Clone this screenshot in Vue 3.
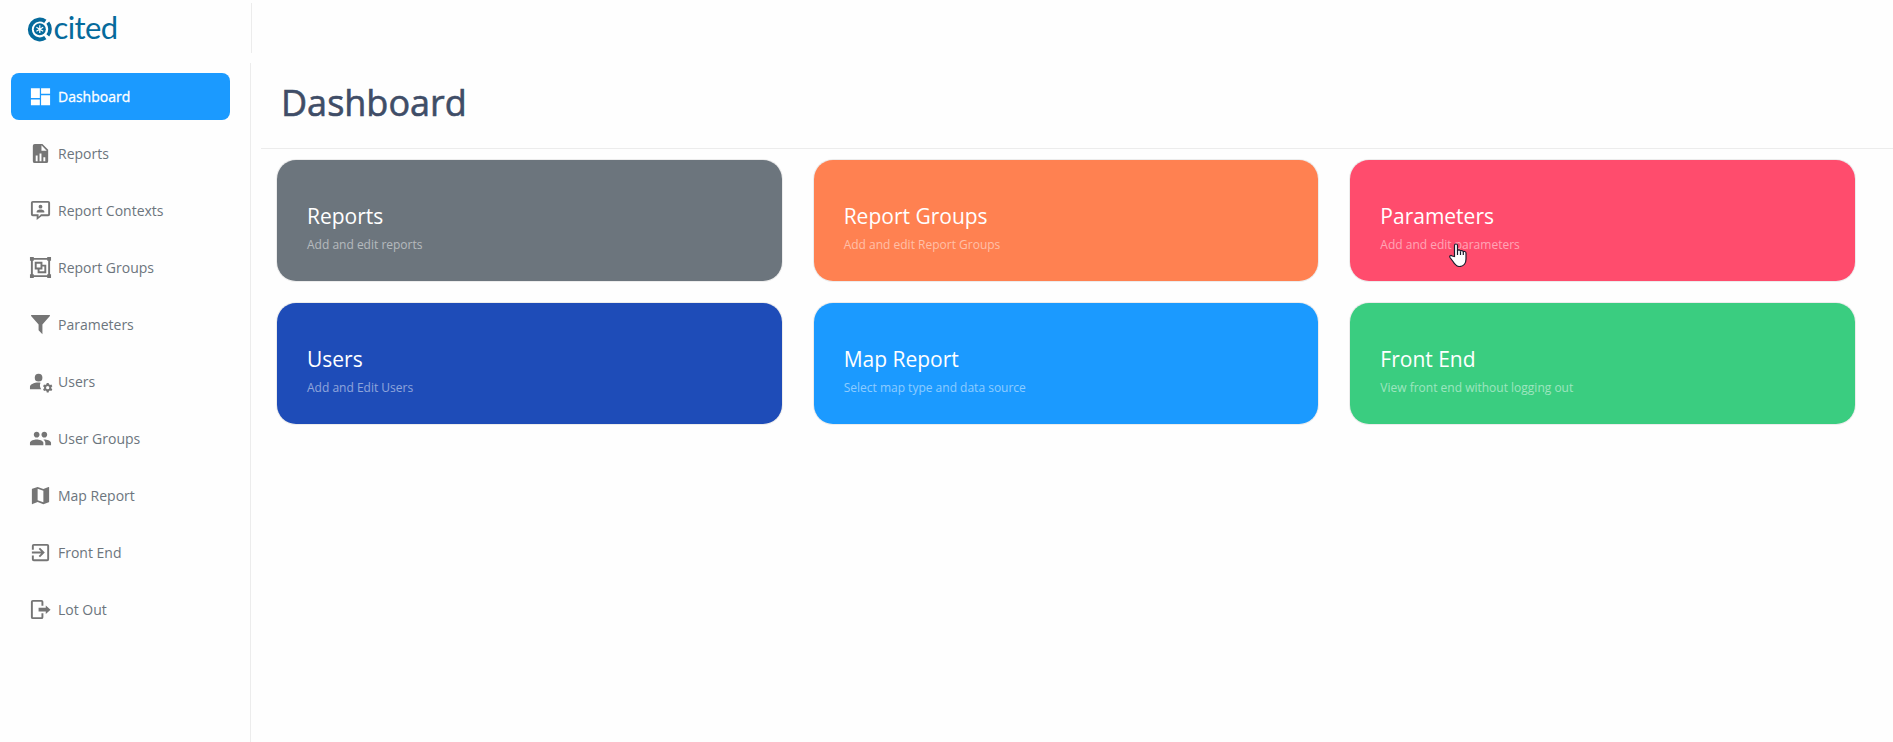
<script setup>
const items = [
  { label: 'Dashboard', active: true, d: 'M2 3.3h9.3v10.2H2zM12.6 3.3H22v5.9h-9.4zM2 15h9.3v6.2H2zM12.6 10.7H22v10.5h-9.4z' },
  { label: 'Reports', d: 'M14 2H6a2 2 0 0 0-2 2v16a2 2 0 0 0 2 2h12a2 2 0 0 0 2-2V8l-6-6zM9 20H7v-6h2v6zm4 0h-2v-8h2v8zm4 0h-2v-4h2v4zM13 9V3.500L18.500 9H13z' },
  { label: 'Report Contexts', d: 'M20 2H4a2 2 0 0 0-2 2v12a2 2 0 0 0 2 2h4v4l5-4h7a2 2 0 0 0 2-2V4a2 2 0 0 0-2-2zm0 14h-7.500L10 18.500V16H4V4h16v12zM12 6a2 2 0 1 1 0 4 2 2 0 0 1 0-4zM16 14H8v-1c0-1.330 2.670-2 4-2s4 .670 4 2v1z' },
  { label: 'Report Groups', d: 'M1 1v4h1v14H1v4h4v-1h14v1h4v-4h-1V5h1V1h-4v1H5V1H1zm4 3h14v1h1v14h-1v1H5v-1H4V5h1V4zm1 2v8h3v4h9V9h-4V6H6zm2 2h4v4H8V8zm6 3h2v5h-5v-2h3v-3z' },
  { label: 'Parameters', d: 'M14 12v10.100l-4-4V12L2.200 3V2h19.600v1L14 12z' },
  { label: 'Users', d: 'M10 12a4 4 0 1 0 0-8 4 4 0 0 0 0 8zM12 13.200C11.400 13.050 10.700 13 10 13c-2.420 0-4.680.500-6.610 1.500C1.800 15.340 1 16.300 1 17.350V20h11.800A6.960 6.960 0 0 1 12 13.200zM23.300 18.500c0-.220-.030-.420-.060-.630l1.140-1.010-1-1.730-1.450.490c-.320-.270-.680-.480-1.080-.630L20.500 13.500h-2l-.300 1.490c-.400.150-.760.360-1.080.630l-1.450-.490-1 1.730 1.140 1.010c-.030.210-.060.410-.060.630s.030.420.060.630l-1.140 1.010 1 1.730 1.450-.490c.320.270.680.480 1.080.630l.3 1.490h2l.300-1.490c.400-.150.760-.360 1.080-.630l1.450.490 1-1.730-1.140-1.010c.030-.210.060-.410.060-.630zM19.500 20.200a1.700 1.700 0 1 1 0-3.400 1.700 1.700 0 0 1 0 3.400z' },
  { label: 'User Groups', d: 'M16 11c1.660 0 2.990-1.340 2.990-3S17.660 5 16 5s-3 1.340-3 3 1.340 3 3 3zM8 11c1.660 0 2.990-1.340 2.990-3S9.660 5 8 5 5 6.340 5 8s1.340 3 3 3zM8 13c-2.330 0-7 1.170-7 3.500V19h14v-2.500c0-2.330-4.670-3.500-7-3.500zM16 13c-.290 0-.620.020-.970.050 1.160.840 1.970 1.970 1.970 3.450V19h6v-2.500c0-2.330-4.670-3.500-7-3.500z' },
  { label: 'Map Report', d: 'M20.500 3l-.160.030L15 5.100 9 3 3.360 4.900a.500.500 0 0 0-.360.480V20.500a.500.500 0 0 0 .660.470L9 18.900l6 2.100 5.640-1.900a.500.500 0 0 0 .360-.480V3.500a.500.500 0 0 0-.500-.500zM15 19l-6-2.110V5l6 2.110V19z' },
  { label: 'Front End', d: 'M10.090 15.590L11.500 17l5-5-5-5-1.410 1.410L12.670 11H3v2h9.670l-2.580 2.590zM19 3H5a2 2 0 0 0-2 2v4h2V5h14v14H5v-4H3v4a2 2 0 0 0 2 2h14a2 2 0 0 0 2-2V5a2 2 0 0 0-2-2z' },
  { label: 'Lot Out', d: 'M4 2a2 2 0 0 0-2 2v16a2 2 0 0 0 2 2h9a2 2 0 0 0 2-2v-4h-2v4H4V4h9v4h2V4a2 2 0 0 0-2-2H4zM17.500 7.700v2.600H10v3.800h7.500v2.600L22.500 12.200 17.500 7.700z' },
]
const cards = [
  { title: 'Reports', text: 'Add and edit reports', tone: 'grey' },
  { title: 'Report Groups', text: 'Add and edit Report Groups', tone: 'orange' },
  { title: 'Parameters', text: 'Add and edit parameters', tone: 'pink', pointer: true },
  { title: 'Users', text: 'Add and Edit Users', tone: 'navy' },
  { title: 'Map Report', text: 'Select map type and data source', tone: 'blue' },
  { title: 'Front End', text: 'View front end without logging out', tone: 'green' },
]
</script>

<template>
  <div class="page">
    <aside class="side">
      <div class="brand">
        <svg class="mark" viewBox="0 0 26 26" fill="none" stroke="#056a9c">
          <path d="M18.300 5.300A9.900 9.900 0 1 0 18.300 21.700" stroke-width="4" />
          <path d="M20.800 6.600A10.300 10.300 0 0 1 20.800 19.400" stroke-width="3.600" />
          <circle cx="12.800" cy="13.200" r="6" fill="#056a9c" stroke="none" />
          <path d="M12.800 9.300v7.800M9.400 11.250l6.800 3.900M9.400 15.150l6.800-3.900" stroke="#fff" stroke-width="1.200" />
        </svg>
        <span class="word">cited</span>
      </div>
      <nav class="nav">
        <a v-for="i in items" :key="i.label" class="item" :class="{ active: i.active }">
          <svg class="icon" viewBox="0 0 24 24"><path :d="i.d" fill="currentColor" fill-rule="evenodd" /></svg>
          <span>{{ i.label }}</span>
        </a>
      </nav>
    </aside>
    <main class="main">
      <header class="head"><h1>Dashboard</h1></header>
      <section class="grid">
        <article v-for="c in cards" :key="c.title" class="card" :class="c.tone">
          <h2>{{ c.title }}</h2>
          <p>{{ c.text }}</p>
          <svg v-if="c.pointer" class="pointer" viewBox="0 0 18 24">
            <path d="M5.500 13.500V2.500C5.500.5 8.500.5 8.500 2.500V8c0-1.500 3-1.500 3 .5 0-1.200 2.800-1.200 2.800.7 0-1.200 2.700-1 2.700.8v6c0 4-2 7.500-6.500 7.500-3.500 0-5-2.500-6.500-5L1 14.500c-.9-1.600.8-2.700 2.200-1.500z" fill="#fff" stroke="#1b1b2c" stroke-width="1.200" />
            <path d="M8.500 7.500V12M11.500 8.500V12M14.300 9V12" stroke="#1b1b2c" stroke-width="1.200" />
          </svg>
        </article>
      </section>
    </main>
  </div>
</template>

<style>
body { margin: 0; background: #fefefe; }
</style>
<style scoped>
.page { display: flex; height: 742px; overflow: hidden; font-family: "Open Sans", "Noto Sans", sans-serif; background: #fefefe; }
.side { width: 252px; flex: none; display: flex; flex-direction: column; box-sizing: border-box; }
.brand { height: 50px; margin-top: 3px; border-right: 1px solid #ececec; box-sizing: border-box; padding: 13px 0 0 27px; display: flex; align-items: flex-start; }
.mark { width: 26px; height: 26px; flex: none; }
.word { font-family: Lato, sans-serif; font-size: 31px; line-height: 23px; color: #056a9c; letter-spacing: -0.6px; margin-left: 0.500px; }
.nav { flex: 1; margin-top: 10px; width: 251px; border-right: 1px solid #ececec; box-sizing: border-box; padding: 10px 20px 0 11px; display: flex; flex-direction: column; gap: 10px; }
.item { height: 47px; flex: none; border-radius: 8px; display: flex; align-items: center; padding-left: 18px; color: #6c757d; font-size: 14px; }
.icon { width: 23px; height: 23px; margin-right: 6px; color: #757575; flex: none; overflow: visible; }
.active { background: #1b9aff; color: #fff; -webkit-text-stroke: 0.300px #fff; }
.active .icon { color: #fff; }
.main { flex: 1; padding-left: 9px; min-width: 0; }
.head { height: 149px; border-bottom: 1px solid #ececec; box-sizing: border-box; padding: 77px 0 0 20px; }
h1 { margin: 0; font-size: 36px; line-height: 52px; font-weight: 500; color: #3f4d67; -webkit-text-stroke: 0.6px #3f4d67; }
.grid { display: grid; grid-template-columns: repeat(3, 1fr); gap: 20px 30px; padding: 10px 37px 0 15px; }
.card { position: relative; height: 123px; box-sizing: border-box; border: 1px solid rgba(0, 0, 0, 0.07); background-clip: padding-box; border-radius: 20px; padding: 42px 30px 0; }
.card h2 { margin: 0; font-size: 21px; line-height: 28px; font-weight: 400; color: #fff; }
.card p { margin: 6px 0 0; font-size: 12px; line-height: 18px; color: rgba(255, 255, 255, 0.5); }
.grey { background-color: #6c757d; }
.orange { background-color: #ff8151; }
.pink { background-color: #ff4c6d; }
.navy { background-color: #1e4cb8; }
.blue { background-color: #1b9aff; }
.green { background-color: #3acd80; }
.pointer { position: absolute; left: 99px; top: 83px; width: 18px; height: 24px; fill: none; }
</style>
